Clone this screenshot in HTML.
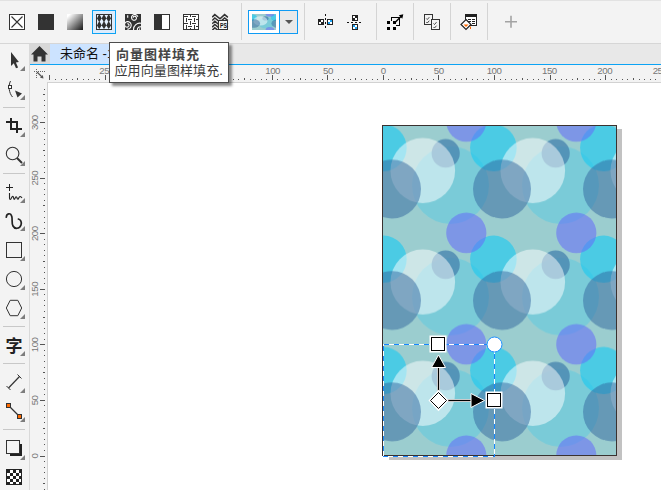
<!DOCTYPE html>
<html><head><meta charset="utf-8"><title>向量图样填充</title>
<style>
html,body{margin:0;padding:0;}
body{width:661px;height:490px;overflow:hidden;background:#fff;position:relative;font-family:"Liberation Sans","Noto Sans CJK SC",sans-serif;}
.abs{position:absolute;}
#topbar{left:0;top:0;width:661px;height:43px;background:#f3f3f3;border-top:1px solid #e2e2e2;border-bottom:1px solid #d6d6d6;box-sizing:content-box;height:42px;}
#tabbar{left:30px;top:44px;width:631px;height:20px;background:#e8e8e8;}
#blueline{left:30px;top:64px;width:631px;height:1px;background:#0ca3f4;}
#toolbox{left:0;top:44px;width:29px;height:446px;background:#f3f3f3;border-right:1px solid #d9d9d9;}
#hometab{left:30px;top:44px;width:20px;height:20px;background:#d8d8d8;}
#doctab{left:50px;top:44px;width:150px;height:20px;background:#cce3ff;font-size:13px;line-height:19px;color:#111;white-space:nowrap;}
#doctab span{position:absolute;left:10px;top:0;}
#hruler{left:30px;top:65px;width:631px;height:18px;background:#f3f3f3;}
#hrb{left:47px;top:82px;width:614px;height:1px;background:#d2d2d2;}
#vrb{left:47px;top:82px;width:1px;height:408px;background:#d2d2d2;}
#vruler{left:30px;top:65px;width:18px;height:425px;background:#f3f3f3;}
#tooltip{left:109px;top:42px;width:118px;height:39px;background:#fff;border:1px solid #4d4d4d;box-shadow:3px 3px 2.5px rgba(0,0,0,0.45);font-size:13px;color:#333;white-space:nowrap;}
#tooltip b{position:absolute;left:6px;top:3px;line-height:17px;letter-spacing:1px;font-weight:bold;color:#454545;}
#tooltip span{position:absolute;left:4.5px;top:19px;line-height:17px;color:#3a3a3a;letter-spacing:0.1px;}
svg{position:absolute;left:0;top:0;}
</style></head><body>
<div class="abs" id="topbar"></div>
<div class="abs" id="tabbar"></div>
<div class="abs" id="toolbox"></div>
<div class="abs" id="hruler"></div>
<div class="abs" id="vruler"></div>
<div class="abs" id="hrb"></div><div class="abs" id="vrb"></div>
<div class="abs" id="hometab"></div>
<div class="abs" id="doctab"><span>未命名 -1</span></div>
<div class="abs" id="blueline"></div>

<svg width="661" height="490" viewBox="0 0 661 490">
<defs>
<pattern id="tile" x="384" y="122.6" width="110" height="111.4" patternUnits="userSpaceOnUse">
<rect x="0" y="0" width="110" height="111.4" fill="#9bcdcf"/>
<g>
<ellipse cx="66.5" cy="62.6" rx="38.5" ry="38.9" fill="#5fcae0" fill-opacity="0.55"/>
<ellipse cx="-0.6" cy="25.2" rx="23.3" ry="23.6" fill="#16caf2" fill-opacity="0.6"/>
<ellipse cx="109.4" cy="25.2" rx="23.3" ry="23.6" fill="#16caf2" fill-opacity="0.6"/>
<ellipse cx="61.7" cy="30.7" rx="14.1" ry="14.3" fill="#4a86b0" fill-opacity="0.8"/>
<ellipse cx="38.8" cy="48" rx="32.3" ry="32.5" fill="#ffffff" fill-opacity="0.5"/>
<ellipse cx="8" cy="66.45" rx="29" ry="29.5" fill="#31659d" fill-opacity="0.5"/>
<ellipse cx="118" cy="66.45" rx="29" ry="29.5" fill="#31659d" fill-opacity="0.5"/>
<ellipse cx="82.3" cy="-1.2" rx="20.1" ry="20.3" fill="#6469f9" fill-opacity="0.55"/>
<ellipse cx="82.3" cy="110.2" rx="20.1" ry="20.3" fill="#6469f9" fill-opacity="0.55"/>
</g>
</pattern>
<linearGradient id="gr" x1="0" y1="0" x2="1" y2="1"><stop offset="0.1" stop-color="#fff"/><stop offset="0.95" stop-color="#222"/></linearGradient>
<clipPath id="swc"><rect x="125" y="14" width="16" height="16"/></clipPath>
<clipPath id="psc"><rect x="212" y="13" width="16.5" height="17"/></clipPath>
<clipPath id="pv"><rect x="0" y="0" width="110" height="111.4"/></clipPath>
</defs>
<!-- rulers -->
<g fill="#555" shape-rendering="crispEdges"><rect x="49" y="75" width="1" height="5"/><rect x="55" y="79" width="1" height="1"/><rect x="61" y="79" width="1" height="1"/><rect x="66" y="79" width="1" height="1"/><rect x="72" y="79" width="1" height="1"/><rect x="77" y="78" width="1" height="2"/><rect x="83" y="79" width="1" height="1"/><rect x="88" y="79" width="1" height="1"/><rect x="94" y="79" width="1" height="1"/><rect x="99" y="79" width="1" height="1"/><rect x="105" y="75" width="1" height="5"/><rect x="111" y="79" width="1" height="1"/><rect x="116" y="79" width="1" height="1"/><rect x="122" y="79" width="1" height="1"/><rect x="127" y="79" width="1" height="1"/><rect x="133" y="78" width="1" height="2"/><rect x="138" y="79" width="1" height="1"/><rect x="144" y="79" width="1" height="1"/><rect x="150" y="79" width="1" height="1"/><rect x="155" y="79" width="1" height="1"/><rect x="161" y="75" width="1" height="5"/><rect x="166" y="79" width="1" height="1"/><rect x="172" y="79" width="1" height="1"/><rect x="177" y="79" width="1" height="1"/><rect x="183" y="79" width="1" height="1"/><rect x="188" y="78" width="1" height="2"/><rect x="194" y="79" width="1" height="1"/><rect x="200" y="79" width="1" height="1"/><rect x="205" y="79" width="1" height="1"/><rect x="211" y="79" width="1" height="1"/><rect x="216" y="75" width="1" height="5"/><rect x="222" y="79" width="1" height="1"/><rect x="227" y="79" width="1" height="1"/><rect x="233" y="79" width="1" height="1"/><rect x="238" y="79" width="1" height="1"/><rect x="244" y="78" width="1" height="2"/><rect x="250" y="79" width="1" height="1"/><rect x="255" y="79" width="1" height="1"/><rect x="261" y="79" width="1" height="1"/><rect x="266" y="79" width="1" height="1"/><rect x="272" y="75" width="1" height="5"/><rect x="277" y="79" width="1" height="1"/><rect x="283" y="79" width="1" height="1"/><rect x="288" y="79" width="1" height="1"/><rect x="294" y="79" width="1" height="1"/><rect x="300" y="78" width="1" height="2"/><rect x="305" y="79" width="1" height="1"/><rect x="311" y="79" width="1" height="1"/><rect x="316" y="79" width="1" height="1"/><rect x="322" y="79" width="1" height="1"/><rect x="327" y="75" width="1" height="5"/><rect x="333" y="79" width="1" height="1"/><rect x="338" y="79" width="1" height="1"/><rect x="344" y="79" width="1" height="1"/><rect x="350" y="79" width="1" height="1"/><rect x="355" y="78" width="1" height="2"/><rect x="361" y="79" width="1" height="1"/><rect x="366" y="79" width="1" height="1"/><rect x="372" y="79" width="1" height="1"/><rect x="377" y="79" width="1" height="1"/><rect x="383" y="75" width="1" height="5"/><rect x="388" y="79" width="1" height="1"/><rect x="394" y="79" width="1" height="1"/><rect x="400" y="79" width="1" height="1"/><rect x="405" y="79" width="1" height="1"/><rect x="411" y="78" width="1" height="2"/><rect x="416" y="79" width="1" height="1"/><rect x="422" y="79" width="1" height="1"/><rect x="427" y="79" width="1" height="1"/><rect x="433" y="79" width="1" height="1"/><rect x="438" y="75" width="1" height="5"/><rect x="444" y="79" width="1" height="1"/><rect x="450" y="79" width="1" height="1"/><rect x="455" y="79" width="1" height="1"/><rect x="461" y="79" width="1" height="1"/><rect x="466" y="78" width="1" height="2"/><rect x="472" y="79" width="1" height="1"/><rect x="477" y="79" width="1" height="1"/><rect x="483" y="79" width="1" height="1"/><rect x="488" y="79" width="1" height="1"/><rect x="494" y="75" width="1" height="5"/><rect x="500" y="79" width="1" height="1"/><rect x="505" y="79" width="1" height="1"/><rect x="511" y="79" width="1" height="1"/><rect x="516" y="79" width="1" height="1"/><rect x="522" y="78" width="1" height="2"/><rect x="527" y="79" width="1" height="1"/><rect x="533" y="79" width="1" height="1"/><rect x="538" y="79" width="1" height="1"/><rect x="544" y="79" width="1" height="1"/><rect x="550" y="75" width="1" height="5"/><rect x="555" y="79" width="1" height="1"/><rect x="561" y="79" width="1" height="1"/><rect x="566" y="79" width="1" height="1"/><rect x="572" y="79" width="1" height="1"/><rect x="577" y="78" width="1" height="2"/><rect x="583" y="79" width="1" height="1"/><rect x="589" y="79" width="1" height="1"/><rect x="594" y="79" width="1" height="1"/><rect x="600" y="79" width="1" height="1"/><rect x="605" y="75" width="1" height="5"/><rect x="611" y="79" width="1" height="1"/><rect x="616" y="79" width="1" height="1"/><rect x="622" y="79" width="1" height="1"/><rect x="627" y="79" width="1" height="1"/><rect x="633" y="78" width="1" height="2"/><rect x="639" y="79" width="1" height="1"/><rect x="644" y="79" width="1" height="1"/><rect x="650" y="79" width="1" height="1"/><rect x="655" y="79" width="1" height="1"/><rect x="661" y="75" width="1" height="5"/><rect x="44" y="489" width="1" height="1"/><rect x="43" y="483" width="2" height="1"/><rect x="44" y="478" width="1" height="1"/><rect x="44" y="472" width="1" height="1"/><rect x="44" y="467" width="1" height="1"/><rect x="44" y="461" width="1" height="1"/><rect x="40" y="456" width="5" height="1"/><rect x="44" y="450" width="1" height="1"/><rect x="44" y="444" width="1" height="1"/><rect x="44" y="439" width="1" height="1"/><rect x="44" y="433" width="1" height="1"/><rect x="43" y="428" width="2" height="1"/><rect x="44" y="422" width="1" height="1"/><rect x="44" y="417" width="1" height="1"/><rect x="44" y="411" width="1" height="1"/><rect x="44" y="405" width="1" height="1"/><rect x="40" y="400" width="5" height="1"/><rect x="44" y="394" width="1" height="1"/><rect x="44" y="389" width="1" height="1"/><rect x="44" y="383" width="1" height="1"/><rect x="44" y="378" width="1" height="1"/><rect x="43" y="372" width="2" height="1"/><rect x="44" y="367" width="1" height="1"/><rect x="44" y="361" width="1" height="1"/><rect x="44" y="355" width="1" height="1"/><rect x="44" y="350" width="1" height="1"/><rect x="40" y="344" width="5" height="1"/><rect x="44" y="339" width="1" height="1"/><rect x="44" y="333" width="1" height="1"/><rect x="44" y="328" width="1" height="1"/><rect x="44" y="322" width="1" height="1"/><rect x="43" y="317" width="2" height="1"/><rect x="44" y="311" width="1" height="1"/><rect x="44" y="305" width="1" height="1"/><rect x="44" y="300" width="1" height="1"/><rect x="44" y="294" width="1" height="1"/><rect x="40" y="289" width="5" height="1"/><rect x="44" y="283" width="1" height="1"/><rect x="44" y="278" width="1" height="1"/><rect x="44" y="272" width="1" height="1"/><rect x="44" y="267" width="1" height="1"/><rect x="43" y="261" width="2" height="1"/><rect x="44" y="255" width="1" height="1"/><rect x="44" y="250" width="1" height="1"/><rect x="44" y="244" width="1" height="1"/><rect x="44" y="239" width="1" height="1"/><rect x="40" y="233" width="5" height="1"/><rect x="44" y="228" width="1" height="1"/><rect x="44" y="222" width="1" height="1"/><rect x="44" y="217" width="1" height="1"/><rect x="44" y="211" width="1" height="1"/><rect x="43" y="205" width="2" height="1"/><rect x="44" y="200" width="1" height="1"/><rect x="44" y="194" width="1" height="1"/><rect x="44" y="189" width="1" height="1"/><rect x="44" y="183" width="1" height="1"/><rect x="40" y="178" width="5" height="1"/><rect x="44" y="172" width="1" height="1"/><rect x="44" y="167" width="1" height="1"/><rect x="44" y="161" width="1" height="1"/><rect x="44" y="155" width="1" height="1"/><rect x="43" y="150" width="2" height="1"/><rect x="44" y="144" width="1" height="1"/><rect x="44" y="139" width="1" height="1"/><rect x="44" y="133" width="1" height="1"/><rect x="44" y="128" width="1" height="1"/><rect x="40" y="122" width="5" height="1"/><rect x="44" y="117" width="1" height="1"/><rect x="44" y="111" width="1" height="1"/><rect x="44" y="105" width="1" height="1"/><rect x="44" y="100" width="1" height="1"/><rect x="43" y="94" width="2" height="1"/><rect x="44" y="89" width="1" height="1"/></g>
<g font-family="Liberation Sans, sans-serif" font-size="9.7" fill="#777" letter-spacing="-0.5"><text x="106.6" y="73.9" text-anchor="middle">250</text><text x="161.9" y="73.9" text-anchor="middle">200</text><text x="217.2" y="73.9" text-anchor="middle">150</text><text x="272.6" y="73.9" text-anchor="middle">100</text><text x="327.9" y="73.9" text-anchor="middle">50</text><text x="383.3" y="73.9" text-anchor="middle">0</text><text x="438.7" y="73.9" text-anchor="middle">50</text><text x="494" y="73.9" text-anchor="middle">100</text><text x="549.4" y="73.9" text-anchor="middle">150</text><text x="604.7" y="73.9" text-anchor="middle">200</text><text x="660" y="73.9" text-anchor="middle">250</text><text transform="translate(38.3 456) rotate(-90)" text-anchor="middle">0</text><text transform="translate(38.3 400.4) rotate(-90)" text-anchor="middle">50</text><text transform="translate(38.3 344.9) rotate(-90)" text-anchor="middle">100</text><text transform="translate(38.3 289.3) rotate(-90)" text-anchor="middle">150</text><text transform="translate(38.3 233.7) rotate(-90)" text-anchor="middle">200</text><text transform="translate(38.3 178.1) rotate(-90)" text-anchor="middle">250</text><text transform="translate(38.3 122.6) rotate(-90)" text-anchor="middle">300</text></g>
<!-- ruler origin icon -->
<g stroke="#666" stroke-width="1" fill="none" shape-rendering="crispEdges">
<path d="M36.5 69V79" stroke-dasharray="1 1"/><path d="M34 71.5H45" stroke-dasharray="1 1"/></g>
<path d="M37 72L42.5 77.5" stroke="#555" stroke-width="1.2"/><path d="M43.5 78.5L40 77.8L42.8 75Z" fill="#555"/>

<!-- page shadow -->
<rect x="617" y="129" width="5" height="331" fill="#c2c2c2"/>
<rect x="389" y="456" width="233" height="4" fill="#c2c2c2"/>
<!-- page -->
<rect x="382.5" y="125.5" width="234" height="330" fill="url(#tile)" stroke="#3a3230" stroke-width="1"/>
<!-- dashed tile box -->
<g fill="none" stroke-width="1" shape-rendering="crispEdges">
<path d="M383.5 344.5H494.5V456.5H383.5Z" stroke="#fff"/>
<path d="M383.5 344.5H494.5V456.5H383.5Z" stroke="#1787ff" stroke-dasharray="5 5"/>
</g>
<!-- handles -->
<g>
<path d="M438.5 392V366" stroke="#fff" stroke-width="3"/>
<path d="M446 400.5H472" stroke="#fff" stroke-width="3"/>
<path d="M438.5 392V366" stroke="#000" stroke-width="1.4"/>
<path d="M446 400.5H472" stroke="#000" stroke-width="1.4"/>
<path d="M438.5 355L445.5 367.5H431.5Z" fill="#000" stroke="#fff" stroke-width="1"/>
<path d="M484.5 400.5L471 393.5V407.5Z" fill="#000" stroke="#fff" stroke-width="1"/>
<rect x="430.5" y="336.5" width="15" height="15" fill="#fff" stroke="#fff" stroke-width="2"/>
<rect x="431.5" y="337.5" width="13" height="13" fill="#fff" stroke="#000" stroke-width="1"/>
<rect x="486.5" y="392.5" width="15" height="15" fill="#fff" stroke="#fff" stroke-width="2"/>
<rect x="487.5" y="393.5" width="13" height="13" fill="#fff" stroke="#000" stroke-width="1"/>
<path d="M438.5 392L446.5 400.5L438.5 409L430.5 400.5Z" fill="#fff" stroke="#fff" stroke-width="3"/>
<path d="M438.5 392.5L446.5 400.5L438.5 408.5L430.5 400.5Z" fill="#fff" stroke="#000" stroke-width="1"/>
<circle cx="494.5" cy="344.5" r="7.5" fill="#fff" stroke="#1e8fff" stroke-width="1"/>
</g>

<!-- ===== top toolbar icons ===== -->
<g>
<!-- no fill -->
<rect x="9.5" y="14.5" width="15" height="15" fill="#fff" stroke="#333"/>
<path d="M11.5 16.5L22.5 27.5M22.5 16.5L11.5 27.5" stroke="#333" stroke-width="1.1"/>
<!-- uniform -->
<rect x="38" y="14" width="16" height="16" fill="#333"/>
<!-- fountain -->
<rect x="67" y="14" width="16" height="16" fill="url(#gr)"/>
<!-- selected vector pattern -->
<rect x="92.5" y="10.5" width="23" height="23" fill="#dcecfc" stroke="#0ca3f4"/>
<rect x="96.5" y="14.5" width="15" height="15" fill="#e6f2ff" stroke="#333"/>
<g fill="#2e2e2e"><path d="M99.3 14.35Q101 16.65 101.5 18.25Q101 19.85 99.3 22.15Q97.6 19.85 97.1 18.25Q97.6 16.65 99.3 14.35Z"/><path d="M104 14.35Q105.7 16.65 106.2 18.25Q105.7 19.85 104 22.15Q102.3 19.85 101.8 18.25Q102.3 16.65 104 14.35Z"/><path d="M108.7 14.35Q110.4 16.65 110.9 18.25Q110.4 19.85 108.7 22.15Q107 19.85 106.5 18.25Q107 16.65 108.7 14.35Z"/><path d="M99.3 21.25Q101 23.55 101.5 25.15Q101 26.75 99.3 29.05Q97.6 26.75 97.1 25.15Q97.6 23.55 99.3 21.25Z"/><path d="M104 21.25Q105.7 23.55 106.2 25.15Q105.7 26.75 104 29.05Q102.3 26.75 101.8 25.15Q102.3 23.55 104 21.25Z"/><path d="M108.7 21.25Q110.4 23.55 110.9 25.15Q110.4 26.75 108.7 29.05Q107 26.75 106.5 25.15Q107 23.55 108.7 21.25Z"/></g>
<!-- bitmap pattern (swirls) -->
<rect x="125" y="14" width="16" height="16" fill="#333"/>
<g fill="none" stroke="#fff" stroke-width="1.1" clip-path="url(#swc)"><path d="M133.3 17.8L133.27 17.58L133.28 17.35L133.34 17.12L133.45 16.9L133.61 16.69L133.81 16.52L134.05 16.38L134.32 16.29L134.61 16.25L134.92 16.27L135.23 16.35L135.52 16.49L135.79 16.69L136.02 16.95L136.2 17.25L136.32 17.6L136.38 17.97L136.36 18.35L136.27 18.74L136.1 19.1L135.86 19.44L135.55 19.73L135.18 19.96L134.77 20.12L134.32 20.2L133.86 20.19L133.4 20.1L132.95 19.91L132.54 19.63L132.19 19.28L131.9 18.86L131.69 18.38L131.58 17.86L131.57 17.31L131.66 16.77L131.86 16.25L132.16 15.76L132.56 15.33L133.03 14.98L133.58 14.73L134.17 14.57L134.79 14.54L135.41 14.62L136.02 14.82L136.58 15.14L137.09 15.56L137.51 16.09L137.82 16.69"/><path d="M127.3 23.8L127.53 23.75L127.77 23.76L128.03 23.81L128.27 23.93L128.5 24.1L128.7 24.32L128.85 24.59L128.95 24.9L128.99 25.24L128.95 25.58L128.84 25.93L128.66 26.26L128.41 26.56L128.09 26.81L127.72 26.99L127.3 27.1L126.86 27.13L126.41 27.06L125.96 26.9L125.55 26.65L125.18 26.31L124.89 25.9L124.67 25.42L124.55 24.9L124.54 24.35L124.63 23.8L124.84 23.26L125.16 22.76L125.58 22.33L126.09 21.98L126.67 21.73L127.3 21.6L127.96 21.6L128.62 21.72L129.25 21.98L129.83 22.37L130.33 22.88L130.73 23.48L131.01 24.16L131.15 24.9L131.14 25.66L130.98 26.43L130.67 27.15L130.22 27.82L129.63 28.39L128.93 28.84L128.14 29.15L127.3 29.3"/><path d="M133.6 30A6.2 6.2 0 0 1 141.5 23.4M137.4 30A2.9 2.9 0 0 1 141.5 27"/><path d="M139.6 29.8V28.6"/><path d="M127.7 15.3V17.8"/></g>
<!-- two-color -->
<rect x="154.5" y="14.5" width="15" height="15" fill="#fff" stroke="#333"/>
<rect x="154" y="14" width="8" height="16" fill="#333"/>
<!-- texture (maze) -->
<rect x="183.5" y="14.5" width="15" height="15" fill="#fff" stroke="#333"/>
<g stroke="#333" stroke-width="1" fill="none" shape-rendering="crispEdges">
<path d="M184 16.5H188M192 16.5H196M186.5 18V22M194.5 18V22M188 19.5H192M196 19.5H198M190.5 21V25M184 23.5H188M192 23.5H196M186.5 25V29M194.5 25V29M188 26.5H192M196 26.5H198M190.5 28V30M190.5 15V17"/>
</g>
<!-- postscript -->
<g stroke="#333" stroke-width="1.5" fill="none" clip-path="url(#psc)"><path d="M212.2 17.2L214.8 14.6L220 18.8L224.6 14.6L228 17.4M212.2 20.5L214.8 17.9L220 22.1L224.6 17.9L228 20.7M212.2 23.8L214.8 21.2L220 25.4L224.6 21.2L228 24M212.2 27.1L214.8 24.5L220 28.7L224.6 24.5L228 27.3M212.2 30.4L214.8 27.8L220 32L224.6 27.8L228 30.6"/></g>
<rect x="218.5" y="20.5" width="9" height="9" fill="#f6f6f6" stroke="#333"/>
<text x="219.9" y="28" font-family="Liberation Sans, sans-serif" font-size="8" font-weight="bold" fill="#111" textLength="7" lengthAdjust="spacingAndGlyphs">PS</text>
</g>
<!-- separators -->
<g fill="#d4d4d4" shape-rendering="crispEdges">
<rect x="241" y="3" width="1" height="37"/><rect x="304" y="3" width="1" height="37"/><rect x="376" y="3" width="1" height="37"/><rect x="413" y="3" width="1" height="37"/><rect x="450" y="3" width="1" height="37"/><rect x="487" y="3" width="1" height="37"/>
</g>
<!-- dropdown -->
<rect x="248.5" y="10.5" width="49" height="23" fill="#fff" stroke="#0f9bf4"/>
<rect x="280" y="11" width="17" height="22" fill="#e9e9e9"/>
<rect x="279" y="11" width="1" height="22" fill="#0f9bf4"/>
<path d="M285 20H293L289 24Z" fill="#555"/>
<g transform="translate(252 14) scale(0.21818 0.14363)" clip-path="url(#pv)">
<rect x="0" y="0" width="110" height="111.4" fill="#9bcdcf"/>
<g>
<ellipse cx="66.5" cy="62.6" rx="38.5" ry="38.9" fill="#5fcae0" fill-opacity="0.55"/>
<ellipse cx="-0.6" cy="25.2" rx="23.3" ry="23.6" fill="#16caf2" fill-opacity="0.6"/>
<ellipse cx="109.4" cy="25.2" rx="23.3" ry="23.6" fill="#16caf2" fill-opacity="0.6"/>
<ellipse cx="61.7" cy="30.7" rx="14.1" ry="14.3" fill="#4a86b0" fill-opacity="0.8"/>
<ellipse cx="38.8" cy="48" rx="32.3" ry="32.5" fill="#ffffff" fill-opacity="0.5"/>
<ellipse cx="8" cy="66.45" rx="29" ry="29.5" fill="#31659d" fill-opacity="0.5"/>
<ellipse cx="118" cy="66.45" rx="29" ry="29.5" fill="#31659d" fill-opacity="0.5"/>
<ellipse cx="82.3" cy="-1.2" rx="20.1" ry="20.3" fill="#6469f9" fill-opacity="0.55"/>
<ellipse cx="82.3" cy="110.2" rx="20.1" ry="20.3" fill="#6469f9" fill-opacity="0.55"/>
</g>
</g>
<!-- mirror tiles -->
<g shape-rendering="crispEdges">
<rect x="318" y="19" width="6" height="6" fill="#222"/><rect x="321" y="20" width="2" height="2" fill="#fff"/><rect x="319" y="22" width="2" height="2" fill="#fff"/>
<rect x="327" y="19" width="6" height="6" fill="#222"/><rect x="328" y="20" width="4" height="4" fill="#fff"/><rect x="330" y="20" width="2" height="2" fill="#1a9ff0"/><rect x="328" y="22" width="2" height="2" fill="#1a9ff0"/>
<path d="M325.5 14V30" stroke="#111" stroke-dasharray="2 2" fill="none"/>
<rect x="352" y="15" width="6" height="6" fill="#222"/><rect x="355" y="18" width="2" height="2" fill="#fff"/><rect x="353" y="16" width="2" height="2" fill="#fff"/>
<rect x="352" y="24" width="6" height="6" fill="#222"/><rect x="353" y="25" width="4" height="4" fill="#fff"/><rect x="353" y="25" width="2" height="2" fill="#1a9ff0"/><rect x="355" y="27" width="2" height="2" fill="#1a9ff0"/>
<path d="M347 22.5H363" stroke="#111" stroke-dasharray="2 2" fill="none"/>
</g>
<!-- transform with object -->
<g shape-rendering="crispEdges" fill="#000">
<rect x="387" y="21" width="3" height="3"/><rect x="393" y="21" width="3" height="3"/><rect x="387" y="27" width="3" height="3"/><rect x="393" y="27" width="3" height="3"/>
<path d="M391.5 21V17.5H399.5V25.5H396" fill="none" stroke="#000"/>
</g>
<path d="M395 22.5L401.5 16" stroke="#000" stroke-width="1.4" fill="none"/><path d="M403.3 14.2L402.3 18.7L398.8 15.2Z" fill="#000"/>
<!-- copy fill -->
<g fill="#f3f3f3" stroke="#333" shape-rendering="crispEdges"><rect x="424.5" y="14.5" width="8" height="10"/><rect x="431.5" y="19.5" width="8" height="10"/></g>
<g stroke="#333" stroke-width="0.9" fill="none"><path d="M426.3 18.5l1 1l2-2.3M426.3 22l1 1l2-2.3M433.5 23.5l1 1l2-2.3M433.5 27l1 1l2-2.3"/></g>
<!-- edit fill -->
<g shape-rendering="crispEdges"><rect x="465.5" y="14.5" width="11" height="11" fill="#fff" stroke="#222"/><rect x="465" y="14" width="12" height="3" fill="#222"/>
<path d="M468 19.5H471M472 19.5H475M468 21.5H471M472 21.5H475M472 23.5H475" stroke="#222" fill="none"/></g>
<path d="M466 19.5L471 24.5L466 29.5L461 24.5Z" fill="#fff" stroke="#222" stroke-width="1.2"/>
<path d="M463.5 24.5H468.5L466 27Z" fill="#ff6a00"/>
<rect x="470" y="26.5" width="1" height="2.5" fill="#ff6a00"/>
<!-- plus -->
<path d="M505 21.8H517M511 15.8V27.8" stroke="#a3a3a3" stroke-width="1.6" fill="none"/>

<!-- home icon -->
<path d="M39.5 46L48 54.5H45.5V61.5H41.5V56.5H37.5V61.5H33.5V54.5H31Z" fill="#333"/>

<!-- ===== toolbox icons ===== -->
<g fill="#c8c8c8" shape-rendering="crispEdges">
<rect x="3" y="107" width="22" height="1"/><rect x="3" y="173" width="22" height="1"/><rect x="3" y="326" width="22" height="1"/><rect x="3" y="363" width="22" height="1"/><rect x="3" y="429" width="22" height="1"/>
</g>
<path d="M25 66V71H20Z" fill="#7d7d7d"/><path d="M25 95V100H20Z" fill="#7d7d7d"/><path d="M25 132V137H20Z" fill="#7d7d7d"/><path d="M25 161V166H20Z" fill="#7d7d7d"/><path d="M25 198V203H20Z" fill="#7d7d7d"/><path d="M25 226V231H20Z" fill="#7d7d7d"/><path d="M25 256V261H20Z" fill="#7d7d7d"/><path d="M25 285V290H20Z" fill="#7d7d7d"/><path d="M25 314V319H20Z" fill="#7d7d7d"/><path d="M25 351V356H20Z" fill="#7d7d7d"/><path d="M25 388V393H20Z" fill="#7d7d7d"/><path d="M25 417V422H20Z" fill="#7d7d7d"/><path d="M25 455V460H20Z" fill="#7d7d7d"/>
<!-- pick -->
<path d="M11 52V66L13.8 63.2L16 68.3L18.1 67.4L15.9 62.4L18.9 61.9Z" fill="#333"/>
<!-- shape -->
<path d="M10.5 81C8 86 9 93 12.5 97" stroke="#333" stroke-width="1" fill="none"/>
<rect x="8.5" y="85.5" width="3" height="3" fill="#fff" stroke="#333"/>
<path d="M15 90.5L22 93.5L17.5 97.5Z" fill="#333"/>
<!-- crop -->
<path d="M11 118V129H22M6 122H17V133" stroke="#222" stroke-width="2" fill="none" shape-rendering="crispEdges"/>
<!-- zoom -->
<circle cx="12.6" cy="153.5" r="6.3" fill="none" stroke="#333" stroke-width="1.1"/>
<path d="M17 158L22 163" stroke="#333" stroke-width="2"/>
<!-- freehand -->
<path d="M9.5 184V191M6 187.5H13" stroke="#222" stroke-width="1" shape-rendering="crispEdges"/>
<path d="M9.5 193V198Q9.7 200.3 11 198.8Q12 196.3 12.8 196.4Q13.5 196.6 13.8 198.8Q14.5 200.2 15.3 197.6Q16 196 16.8 197.2Q17.3 199.6 18.3 199Q19 197 20 196.5Q21 196.3 22 198" stroke="#222" stroke-width="1.1" fill="none"/>
<!-- artistic media -->
<path d="M6.3 217.2C6.5 213.3 10.6 212.3 11.8 216.5C12.6 219.5 11.4 223 13 226C14.6 229.2 19.6 229.2 21 225C22 222 20.6 219.6 18.4 219" stroke="#222" stroke-width="1.7" fill="none" stroke-linecap="round"/>
<!-- rectangle -->
<rect x="6.5" y="242.5" width="15" height="15" fill="none" stroke="#333"/>
<!-- ellipse -->
<circle cx="14" cy="279" r="7.6" fill="none" stroke="#333" stroke-width="1"/>
<!-- polygon -->
<path d="M6.3 308L10.2 300.3H17.8L21.7 308L17.8 315.7H10.2Z" fill="none" stroke="#333" stroke-width="1"/>
<!-- text -->
<text x="14" y="351.5" font-family="Noto Sans CJK SC, sans-serif" font-weight="bold" font-size="17" fill="#222" text-anchor="middle">字</text>
<!-- dimension -->
<path d="M8.5 388L19.5 376.5" stroke="#333" stroke-width="1.2"/><path d="M6.5 386L10.5 390M17.5 374.5L21.5 378.5" stroke="#333" stroke-width="1"/>
<!-- connector -->
<path d="M8.5 405.5L19.5 416.5" stroke="#333" stroke-width="1.3"/>
<rect x="6.5" y="403.5" width="4" height="4" fill="#ff6a00" stroke="#333"/><rect x="17.5" y="414.5" width="4" height="4" fill="#ff6a00" stroke="#333"/>
<!-- drop shadow -->
<g shape-rendering="crispEdges"><rect x="20" y="444" width="2" height="12" fill="#222"/><rect x="10" y="454" width="12" height="2" fill="#222"/>
<rect x="6.5" y="440.5" width="13" height="13" fill="#f5f5f5" stroke="#333"/></g>
<!-- transparency checker -->
<rect x="6" y="469" width="16" height="16" fill="#222"/>
<g fill="#fff" shape-rendering="crispEdges">
<rect x="10" y="470" width="3" height="3"/><rect x="16" y="470" width="3" height="3"/>
<rect x="7" y="473" width="3" height="3"/><rect x="13" y="473" width="3" height="3"/><rect x="19" y="473" width="2" height="3"/>
<rect x="10" y="476" width="3" height="3"/><rect x="16" y="476" width="3" height="3"/>
<rect x="7" y="479" width="3" height="3"/><rect x="13" y="479" width="3" height="3"/><rect x="19" y="479" width="2" height="3"/>
<rect x="10" y="482" width="3" height="2"/><rect x="16" y="482" width="3" height="2"/>
</g>
</svg>
<div class="abs" id="tooltip"><b>向量图样填充</b><span>应用向量图样填充.</span></div>
</body></html>
